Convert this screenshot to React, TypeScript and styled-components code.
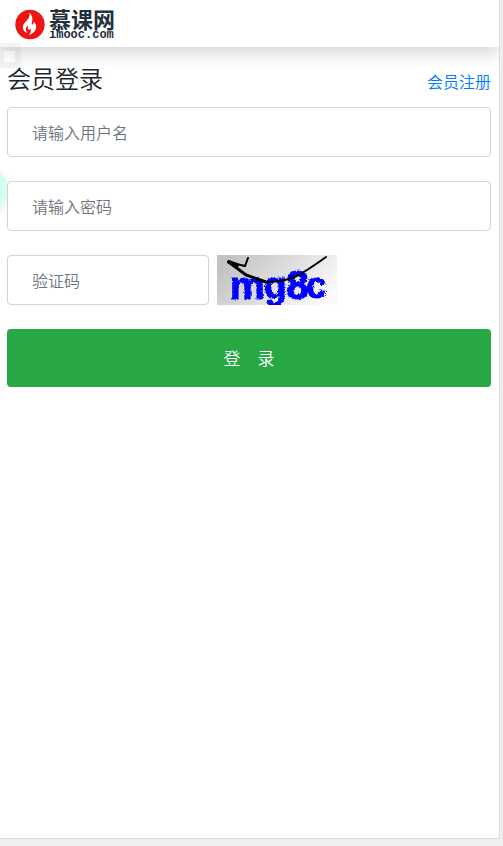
import React from "react";
import styled, { createGlobalStyle } from "styled-components";

const GlobalStyle = createGlobalStyle`
  *, *::before, *::after { box-sizing: border-box; }
  html { background: #efefef; }
  body {
    margin: 0;
    color: #212529;
    font-family: "Noto Sans CJK SC", "Liberation Sans", sans-serif;
    font-size: 16px;
    font-weight: 350;
    line-height: 24px;
  }
`;

const Frame = styled.div`
  min-height: 100vh;
  padding: 0 3px 7px 0;
  display: flex;
  background: #efefef;
`;

const Page = styled.div`
  position: relative;
  flex: 1;
  min-width: 0;
  background: #fff;
  border: solid #dcdcdc;
  border-width: 0 1px 1px 0;
  overflow: hidden;
`;

const Header = styled.header`
  height: 47px;
  padding: 8px 15px;
  background: #fff;
  box-shadow: 0 8px 16px rgba(0, 0, 0, 0.15);
`;

const Brand = styled.a`
  display: flex;
  width: max-content;
  color: #24303b;
  text-decoration: none;
`;

const Logo = styled.svg`
  display: block;
  width: 104px;
  height: 32px;
  overflow: visible;
`;

const FloatingSquare = styled.span`
  position: absolute;
  left: 0;
  top: 43px;
  width: 21px;
  height: 25px;
  border: solid rgba(150, 150, 150, 0.1);
  border-width: 8px 6px 6px 4px;
  background: rgba(255, 255, 255, 0.3);
  background-clip: padding-box;
  pointer-events: none;
`;

const FloatingCircle = styled.span`
  position: absolute;
  left: -36px;
  top: 167px;
  width: 44px;
  height: 44px;
  border-radius: 50%;
  background: #d3ffed;
  box-shadow: 0 4px 8px rgba(0, 0, 0, 0.08);
  pointer-events: none;
`;

const Main = styled.main`
  position: relative;
  padding: 16px 8px 24px 7px;
`;

const TitleRow = styled.div`
  display: flex;
  align-items: baseline;
  justify-content: space-between;
  margin-bottom: 14px;
`;

const Title = styled.h1`
  margin: 0;
  font-size: 24px;
  font-weight: 350;
  line-height: 29px;
`;

const RegisterLink = styled.a`
  color: #007bff;
  text-decoration: none;
`;

const Form = styled.form`
  display: flex;
  flex-direction: column;
  gap: 24px;
`;

const TextField = styled.input<{ $short?: boolean }>`
  width: ${(p) => (p.$short ? "41.6667%" : "100%")};
  height: 50px;
  padding: 0 24px;
  border: 1px solid #ced4da;
  border-radius: 4px;
  background: #fff;
  color: #495057;
  font: inherit;
  &::placeholder { color: #6c757d; opacity: 1; }
`;

const CodeRow = styled.div`
  display: flex;
  gap: 8px;
`;

const CaptchaButton = styled.button`
  padding: 0;
  border: 0;
  background: none;
  cursor: pointer;
`;

const Captcha = styled.svg`
  display: block;
  width: 120px;
  height: 50px;
`;

const SubmitButton = styled.button`
  height: 58px;
  border: 0;
  border-radius: 4px;
  background: #28a745;
  color: #fff;
  font: inherit;
  font-size: 17px;
  white-space: pre;
  cursor: pointer;
`;

function SiteLogo() {
  return (
    <Logo viewBox="0 0 104 32" role="img" aria-label="慕课网 imooc.com">
      <circle cx="15" cy="16.5" r="14.7" fill="#f01414" />
      <path
        d="M14.4 4.4c2.6 2.6 3.4 5.2 2.9 8.2-.2 1.6-1 3-.3 3.8.9.6 1.9-.8 1.6-2.9 2.4 2.3 3.2 4.7 2.3 7.2-.8 2.4-2.7 5-7.1 6.2 1.9-2 2.7-4.1 1.6-6.5-.4 1.3-1.1 1.7-1.9 1.2-1-.8-.6-2.5-.9-4.3-1.7 2-2.1 3.6-1.5 5.3.3 1 .8 1.8 1.6 2.6-2.9-.8-4.6-2.7-4.8-5.4-.3-3.3 2.1-5.2 4.6-8 1.9-2.2 2.5-4.5 1.9-7.4Z"
        fill="#fff"
      />
      <text x="34" y="20" fill="currentColor" fontFamily="'Noto Sans CJK SC', sans-serif" fontSize="22" fontWeight="700">
        慕课网
      </text>
      <text x="34" y="30" fill="currentColor" fontFamily="'Liberation Mono', monospace" fontSize="12" fontWeight="700">
        imooc.com
      </text>
    </Logo>
  );
}

function CaptchaPicture() {
  return (
    <Captcha viewBox="0 0 120 50" role="img" aria-label="验证码图片">
      <defs>
        <linearGradient id="captchaShade" x1="0" y1="0.3" x2="1" y2="0.7">
          <stop offset="0" stopColor="#c2c2c2" />
          <stop offset="1" stopColor="#fbfbfb" />
        </linearGradient>
        <filter id="ripple" x="-10%" y="-10%" width="120%" height="120%">
          <feTurbulence type="turbulence" baseFrequency="0.3" numOctaves="1" seed="4" />
          <feDisplacementMap in="SourceGraphic" scale="3" xChannelSelector="R" yChannelSelector="G" />
        </filter>
      </defs>
      <rect width="120" height="50" fill="url(#captchaShade)" />
      <g fill="#00f" stroke="#00f" strokeWidth="1" fontFamily="'Liberation Sans', sans-serif" fontWeight="700" filter="url(#ripple)">
        <text x="12" y="43" fontSize="39">m</text>
        <text x="46" y="42" fontSize="37">g</text>
        <text x="68" y="43" fontSize="41">8</text>
        <text x="88" y="42" fontSize="37">c</text>
      </g>
      <g fill="none" stroke="#000" strokeLinecap="round">
        <path d="M13 8 29 20 49 27" strokeWidth="3" />
        <path d="M11 7 28 11 31 3M49 27 Q63 27 75 23 Q84 20 109 2" strokeWidth="2" />
        <path d="M12 7 20 10" strokeWidth="4" />
      </g>
    </Captcha>
  );
}

export default function App() {
  return (
    <>
      <GlobalStyle />
      <Frame>
        <Page>
          <Header>
            <Brand href="#home">
              <SiteLogo />
            </Brand>
          </Header>
          <FloatingSquare />
          <FloatingCircle />
          <Main>
            <TitleRow>
              <Title>会员登录</Title>
              <RegisterLink href="#register">会员注册</RegisterLink>
            </TitleRow>
            <Form onSubmit={(event) => event.preventDefault()}>
              <TextField type="text" aria-label="用户名" placeholder="请输入用户名" autoComplete="username" />
              <TextField type="password" aria-label="密码" placeholder="请输入密码" autoComplete="current-password" />
              <CodeRow>
                <TextField $short type="text" aria-label="验证码" placeholder="验证码" autoComplete="off" />
                <CaptchaButton type="button" aria-label="刷新验证码">
                  <CaptchaPicture />
                </CaptchaButton>
              </CodeRow>
              <SubmitButton type="submit">{"登　录"}</SubmitButton>
            </Form>
          </Main>
        </Page>
      </Frame>
    </>
  );
}
